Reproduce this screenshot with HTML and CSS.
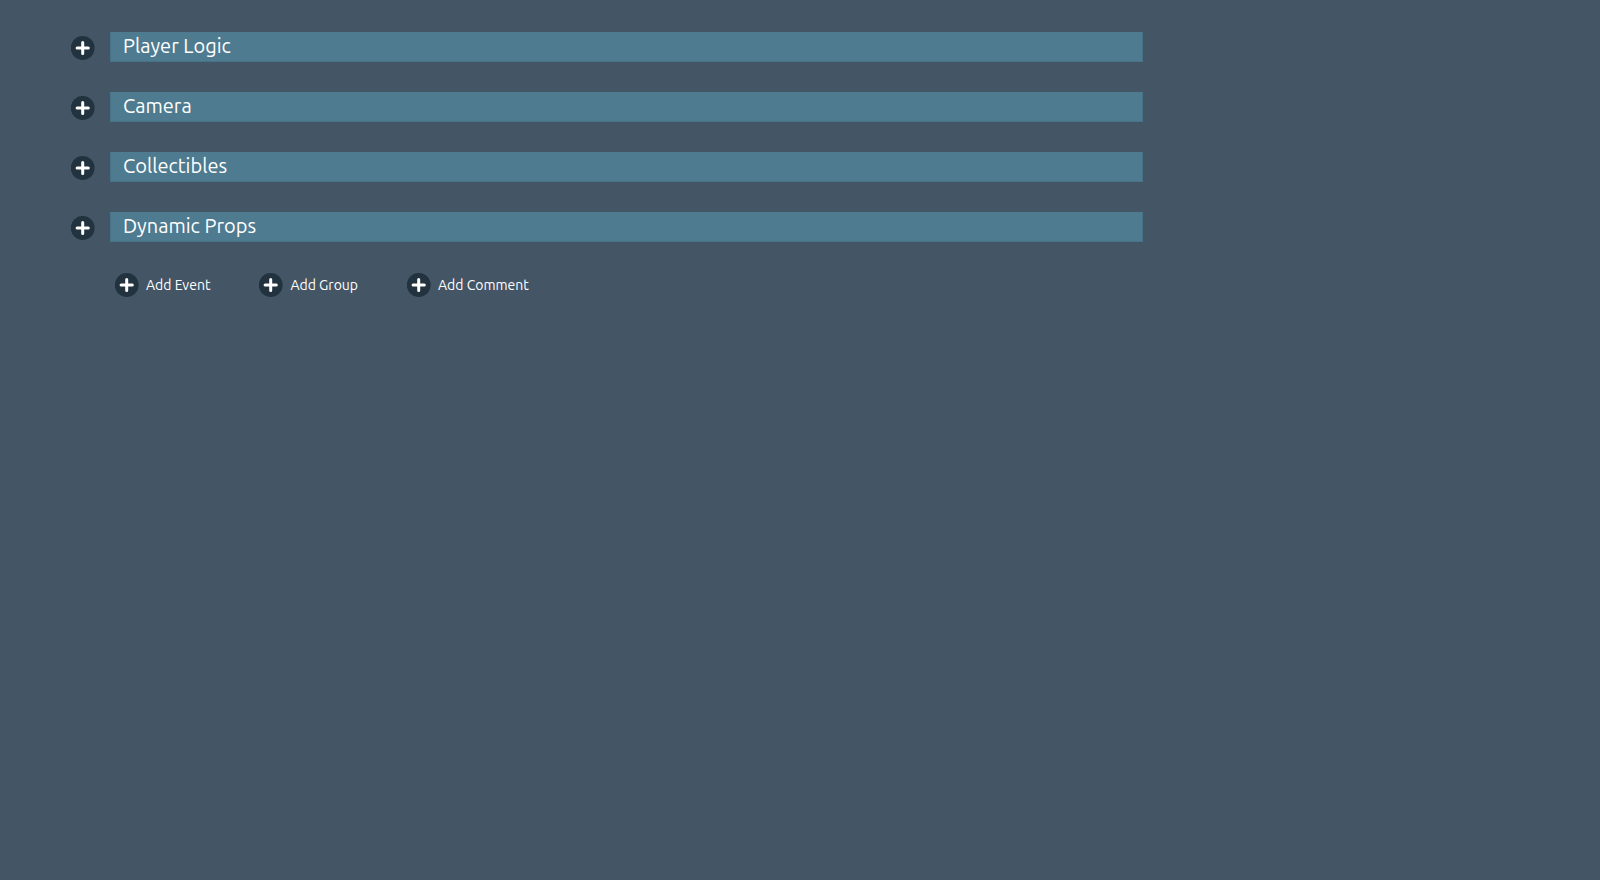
FILE: index.html
```html
<!DOCTYPE html>
<html lang="en">
<head>
<meta charset="utf-8">
<meta name="viewport" content="width=device-width, initial-scale=1">
<title>Event Sheet</title>
<link rel="stylesheet" href="styles.css">
</head>
<body>
<svg class="sprite" aria-hidden="true">
  <symbol id="plus" viewBox="0 0 24 24">
    <circle cx="11.7" cy="12" r="11.9" fill="#22323e"/>
    <path d="M11.7 6.4v11.2M6.1 12h11.2" fill="none" stroke="#fff" stroke-width="3" stroke-linecap="round"/>
  </symbol>
</svg>
<main class="sheet">
  <ul class="groups">
    <li class="group">
      <button class="expand" type="button" aria-label="Expand Player Logic"><svg class="icon"><use href="#plus"/></svg></button>
      <h2 class="group-title">Player Logic</h2>
    </li>
    <li class="group">
      <button class="expand" type="button" aria-label="Expand Camera"><svg class="icon"><use href="#plus"/></svg></button>
      <h2 class="group-title">Camera</h2>
    </li>
    <li class="group">
      <button class="expand" type="button" aria-label="Expand Collectibles"><svg class="icon"><use href="#plus"/></svg></button>
      <h2 class="group-title">Collectibles</h2>
    </li>
    <li class="group">
      <button class="expand" type="button" aria-label="Expand Dynamic Props"><svg class="icon"><use href="#plus"/></svg></button>
      <h2 class="group-title">Dynamic Props</h2>
    </li>
  </ul>
  <div class="actions">
    <button class="action" type="button"><svg class="icon"><use href="#plus"/></svg>Add Event</button>
    <button class="action" type="button"><svg class="icon"><use href="#plus"/></svg>Add Group</button>
    <button class="action" type="button"><svg class="icon"><use href="#plus"/></svg>Add Comment</button>
  </div>
</main>
</body>
</html>
```
FILE: styles.css
```css
* {
  box-sizing: border-box;
}

body {
  margin: 0;
  background: #445566;
  color: #fff;
  font-family: Ubuntu, "Noto Sans", "Open Sans", sans-serif;
}

button {
  padding: 0;
  border: 0;
  background: none;
  color: inherit;
  font: inherit;
  cursor: pointer;
}

.sprite {
  position: absolute;
  width: 0;
  height: 0;
}

.icon {
  display: block;
  flex: none;
  width: 24px;
  height: 24px;
  overflow: visible;
}

.sheet {
  max-width: 1143px;
  padding: 32px 0 32px 71px;
}

.groups {
  display: flex;
  flex-direction: column;
  gap: 30px;
  margin: 0;
  padding: 0;
  list-style: none;
}

.group {
  display: flex;
  align-items: flex-end;
  gap: 15px;
  height: 30px;
}

.expand {
  margin-bottom: 2px;
}

.group-title {
  flex: 1;
  margin: 0;
  padding: 0 12px 2px;
  border: 1px solid #467388;
  border-top-color: #4e7b90;
  background: #4e7b90;
  font-size: 20px;
  font-weight: 400;
  line-height: 26px;
}

.actions {
  display: flex;
  flex-wrap: wrap;
  gap: 49px;
  margin-top: 31px;
  padding-left: 44px;
}

.action {
  display: flex;
  align-items: center;
  gap: 7px;
  font-size: 14px;
  line-height: 24px;
}
```
